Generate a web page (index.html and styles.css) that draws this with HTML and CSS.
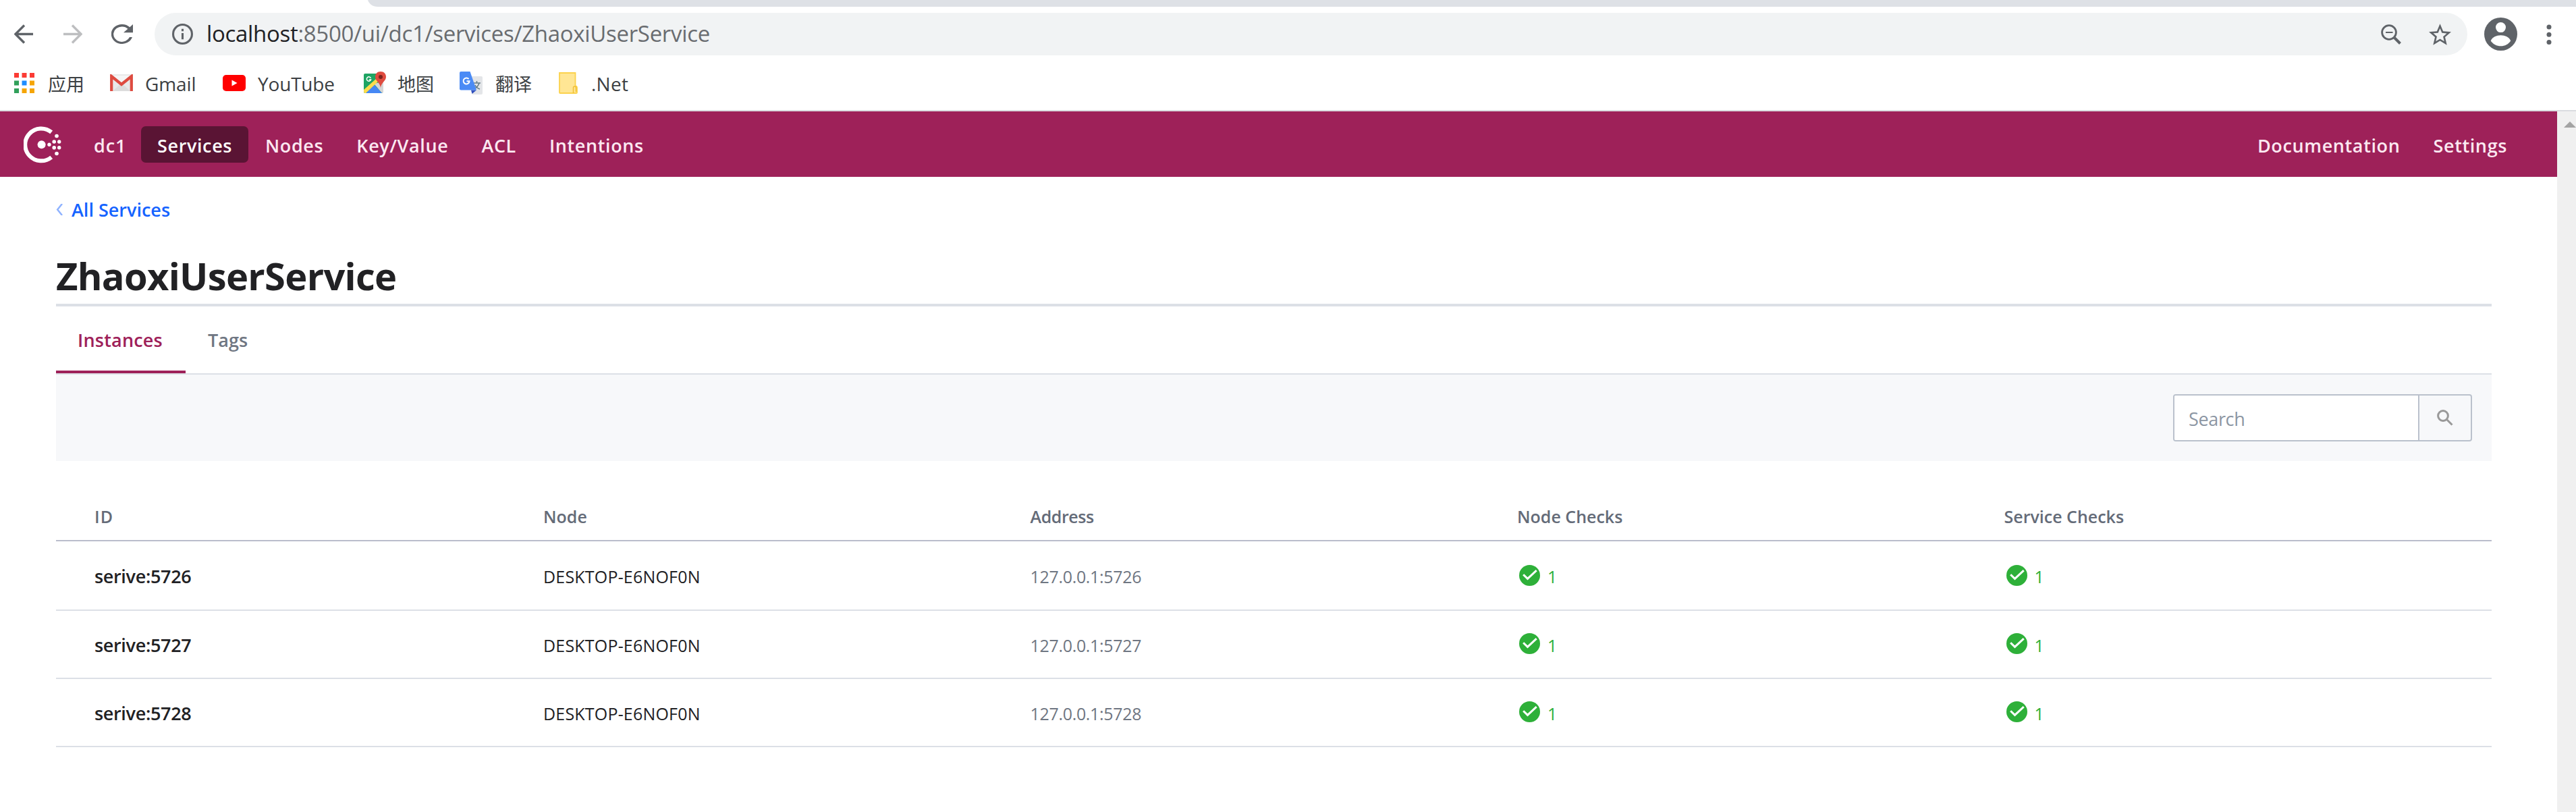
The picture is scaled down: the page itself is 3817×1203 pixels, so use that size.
FILE: index.html
```html
<!DOCTYPE html>
<html lang="zh-CN">
<head>
<meta charset="utf-8">
<title>ZhaoxiUserService</title>
<link rel="stylesheet" href="styles.css">
</head>
<body>
<div class="tab-strip"><svg class="tab-curve" viewBox="0 0 15 10"><path d="M0 0h15v10C7 10 2 6 0 0z"/></svg><div class="tab-rest"></div></div>
<div class="toolbar">
  <svg class="nav-icon back" viewBox="0 0 30 30"><path d="M29 15H2M15.500 1.500 2 15l13.500 13.500"/></svg>
  <svg class="nav-icon forward" viewBox="0 0 30 30"><path d="M1 15h27M14.500 1.500 28 15 14.500 28.500"/></svg>
  <svg class="reload" viewBox="4 4 16 16" preserveAspectRatio="none"><path d="M17.650 6.350A7.960 7.960 0 0 0 12 4a8 8 0 1 0 7.500 10.500h-2A6.200 6.200 0 1 1 12 5.900c1.660 0 3.140.69 4.220 1.780L13 10.800h7V4z"/></svg>
  <div class="address">
    <svg class="info" viewBox="0 0 30 30"><circle cx="15" cy="15" r="13.500"/><path d="M15 13.500v9M15 7.500v3.400"/></svg>
    <span class="url"><b>localhost</b>:8500/ui/dc1/services/ZhaoxiUserService</span>
    <svg class="zoom-out" viewBox="0 0 30 30"><circle cx="12" cy="12" r="10.400"/><path d="M20 20l8.500 8.500" class="thick"/><path d="M7 12h10.500" class="thin"/></svg>
    <svg class="star" viewBox="2 2 20 19"><path d="M22 9.240l-7.190-.62L12 2 9.190 8.630 2 9.240l5.460 4.730L5.820 21 12 17.270 18.180 21l-1.630-7.030L22 9.240zM12 15.400l-3.760 2.270 1-4.280-3.320-2.880 4.380-.38L12 6.100l1.710 4.040 4.380.38-3.320 2.880 1 4.280L12 15.400z"/></svg>
  </div>
  <svg class="avatar" viewBox="0 0 49 49"><circle cx="24.500" cy="24.500" r="24.500"/><g class="hole"><circle cx="24.500" cy="14.600" r="7.500"/><path d="M9.700 34.500C12 29 18 26.300 24.500 26.300S37 29 39.200 34.500C36 39.500 30.500 42.300 24.500 42.300S13 39.500 9.700 34.500z"/></g></svg>
  <svg class="kebab" viewBox="0 0 8 30"><circle cx="4" cy="4" r="3.500"/><circle cx="4" cy="15.200" r="3.500"/><circle cx="4" cy="26.400" r="3.500"/></svg>
</div>
<div class="bookmarks">
  <svg class="i-apps" viewBox="0 0 30 30"><path fill="#fb3b34" d="M0 0h7v7H0zM11.500 0h7v7h-7zM23 0h7v7h-7z"/><path fill="#31a05a" d="M0 11.500h7v7H0zM0 23h7v7H0z"/><path fill="#1e8cff" d="M11.500 11.500h7v7h-7z"/><path fill="#f5a506" d="M23 11.500h7v7h-7zM11.500 23h7v7h-7zM23 23h7v7h-7z"/></svg>
  <span class="cjk b-apps">应用</span>
  <svg class="i-gmail" viewBox="0 0 34 25"><rect width="34" height="25" rx="2" fill="#e9e9e9"/><path d="M4 25 17 13l13 12z" fill="#dcdcdc"/><path d="M4 2l13 11L30 2z" fill="#f5f5f5"/><path d="M2.200 25V3L17 15 31.800 3v22" fill="none" stroke="#de4b40" stroke-width="4.200"/></svg>
  <span class="b-gmail">Gmail</span>
  <svg class="i-youtube" viewBox="0 0 34 24"><rect width="34" height="24" rx="5" fill="#f00"/><path d="M13.500 7.500v9l8-4.500z" fill="#fff"/></svg>
  <span class="b-youtube">YouTube</span>
  <svg class="i-maps" viewBox="0 0 33 33"><path d="M2 3h26v29H2a2 2 0 0 1-2-2V5a2 2 0 0 1 2-2z" fill="#1fa463"/><path d="M29 15v15a2 2 0 0 1-2 2L15 18z" fill="#d5d5d5"/><path d="M15 19 27 32H3z" fill="#4687f4"/><path d="M0 27 18 11l3 4L3 32H2q-2 0-2-3z" fill="#fedc4c"/><path d="M10.500 9.800A3.200 3.200 0 1 0 10.600 12H7.800" fill="none" stroke="#fff" stroke-width="1.500"/><path d="M25 0c5 0 8 3.500 8 8 0 6-7 8-8 16-1-8-8-10-8-16 0-4.500 3-8 8-8z" fill="#df4b3f"/><circle cx="25" cy="8" r="3" fill="#7c231d"/></svg>
  <span class="cjk b-maps">地图</span>
  <svg class="i-translate" viewBox="0 0 34 34"><path d="M14 7h18a2 2 0 0 1 2 2v23a2 2 0 0 1-2 2H19z" fill="#e3e5e8"/><path d="M20 17h11M25.500 14v3M29 17c-1 4-4 7-8 9M23 20c1 3 4 5 7 6" fill="none" stroke="#647d87" stroke-width="1.500"/><path d="M17 27.500h8L18.500 33z" fill="#3150bd"/><path d="M2 0h13.500L25 27.500H2a2 2 0 0 1-2-2V2a2 2 0 0 1 2-2z" fill="#4b8bf5"/><path d="M13.500 11A4.500 4.500 0 1 0 14.600 14.200H10.500" fill="none" stroke="#fff" stroke-width="2"/></svg>
  <span class="cjk b-translate">翻译</span>
  <svg class="i-folder" viewBox="0 0 28 32"><path d="M1 1h23.500v19.500q2.500.3 2.500 2.500v7q0 1-1 1H2q-1 0-1-1z" fill="#ffe694" stroke="#fbd24c" stroke-width="1.800"/><path d="M21.500 31v-8q0-2 2-2t2 2v6" fill="none" stroke="#f0bf35" stroke-width="1.500"/></svg>
  <span class="b-net">.Net</span>
</div>
<div class="viewport">
  <div class="page">
    <nav class="main-nav">
      <svg class="logo" viewBox="0 0 56 55"><path d="M41.200 8.900A23.900 23.900 0 1 0 41.200 46"/><g><circle cx="26.600" cy="27.300" r="6"/><circle cx="38" cy="27.300" r="2.700"/><circle cx="45.200" cy="23" r="2.800"/><circle cx="45.200" cy="31.700" r="2.800"/><circle cx="52.700" cy="23" r="2.700"/><circle cx="52.700" cy="31.700" r="2.700"/><circle cx="49" cy="14.500" r="2.800"/><circle cx="49" cy="40.500" r="2.800"/></g></svg>
      <a class="dc">dc1</a>
      <a class="link active">Services</a>
      <a class="link">Nodes</a>
      <a class="link">Key/Value</a>
      <a class="link">ACL</a>
      <a class="link">Intentions</a>
      <span class="push"></span>
      <a class="link">Documentation</a>
      <a class="link">Settings</a>
    </nav>
    <main class="content">
      <a class="crumb"><svg viewBox="0 0 11 17"><path d="M9 0 2.200 8.500 9 17"/></svg><span>All Services</span></a>
      <h1 class="title">ZhaoxiUserService</h1>
      <div class="tabs"><a class="tab selected">Instances</a><a class="tab">Tags</a></div>
      <div class="filter"><div class="search"><span class="field">Search</span><span class="button"><svg viewBox="0 0 24 24"><circle cx="9" cy="9" r="7.400"/><path d="M14.500 14.500l8 8"/></svg></span></div></div>
      <div class="table">
        <div class="row head"><span class="wide">ID</span><span>Node</span><span class="tight">Address</span><span>Node Checks</span><span>Service Checks</span></div>
        <div class="row first"><span class="id">serive:5726</span><span class="node">DESKTOP-E6NOF0N</span><span class="addr">127.0.0.1:5726</span><span class="ok"><svg viewBox="0 0 31 31"><circle cx="15.500" cy="15.500" r="15.500"/><path d="M6.200 14.200l6.300 6.200L25.700 8.200"/></svg><span>1</span></span><span class="ok"><svg viewBox="0 0 31 31"><circle cx="15.500" cy="15.500" r="15.500"/><path d="M6.200 14.200l6.300 6.200L25.700 8.200"/></svg><span>1</span></span></div>
        <div class="row"><span class="id">serive:5727</span><span class="node">DESKTOP-E6NOF0N</span><span class="addr">127.0.0.1:5727</span><span class="ok"><svg viewBox="0 0 31 31"><circle cx="15.500" cy="15.500" r="15.500"/><path d="M6.200 14.200l6.300 6.200L25.700 8.200"/></svg><span>1</span></span><span class="ok"><svg viewBox="0 0 31 31"><circle cx="15.500" cy="15.500" r="15.500"/><path d="M6.200 14.200l6.300 6.200L25.700 8.200"/></svg><span>1</span></span></div>
        <div class="row"><span class="id">serive:5728</span><span class="node">DESKTOP-E6NOF0N</span><span class="addr">127.0.0.1:5728</span><span class="ok"><svg viewBox="0 0 31 31"><circle cx="15.500" cy="15.500" r="15.500"/><path d="M6.200 14.200l6.300 6.200L25.700 8.200"/></svg><span>1</span></span><span class="ok"><svg viewBox="0 0 31 31"><circle cx="15.500" cy="15.500" r="15.500"/><path d="M6.200 14.200l6.300 6.200L25.700 8.200"/></svg><span>1</span></span></div>
      </div>
    </main>
  </div>
  <div class="scrollbar"><svg viewBox="0 0 18 9"><path d="M9 0l9 9H0z"/></svg></div>
</div>
</body>
</html>
```
FILE: styles.css
```css
* { box-sizing: border-box; }
body { margin: 0; width: 3817px; height: 1203px; overflow: hidden; display: flex; flex-direction: column; background: #fff; font-family: "Open Sans", "Noto Sans CJK SC", sans-serif; color: #212124; }
svg { display: block; flex: none; }
span, a { white-space: nowrap; }

.tab-strip { display: flex; height: 10px; padding-left: 545px; }
.tab-curve { width: 15px; height: 10px; fill: #dee1e6; }
.tab-rest { flex: 1; background: #dee1e6; }

.toolbar { display: flex; align-items: center; height: 81px; padding-left: 21px; }
.nav-icon { width: 29px; height: 29px; fill: none; stroke: #5f6368; stroke-width: 3.600; }
.forward { margin-left: 43px; stroke: #bdbec0; }
.reload { width: 32px; height: 29px; margin-left: 43px; fill: #5f6368; }
.address { display: flex; align-items: center; width: 3427px; height: 63px; margin-left: 32px; padding-left: 26px; border-radius: 32px; background: #f1f3f4; }
.info { width: 31px; height: 31px; fill: none; stroke: #5f6368; stroke-width: 3; }
.url { flex: 1; margin-left: 20px; padding-bottom: 3px; font-size: 33px; line-height: 57px; letter-spacing: -0.310px; color: #696c70; }
.url b { font-weight: 400; color: #202124; }
.zoom-out { width: 30px; height: 30px; fill: none; stroke: #5f6368; stroke-width: 2.800; }
.zoom-out .thick { stroke-width: 4; }
.zoom-out .thin { stroke-width: 2; }
.star { width: 33px; height: 32px; margin: 0 24px 0 41px; fill: #5f6368; }
.avatar { width: 49px; height: 49px; margin-left: 25px; fill: #5f6368; }
.hole { fill: #fff; }
.kebab { width: 8px; height: 30px; margin-left: 43px; fill: #5f6368; }

.bookmarks { display: flex; align-items: center; height: 74px; padding: 0 0 9px 21px; border-bottom: 2px solid #dadce0; font-size: 28px; line-height: 40px; color: #3c4043; }
.bookmarks span { padding-top: 3px; }
.cjk { font-family: "Noto Sans CJK SC", sans-serif; font-size: 27px; width: 54px; }
.i-apps { width: 30px; height: 30px; }
.i-gmail { width: 34px; height: 25px; }
.i-youtube { width: 34px; height: 24px; }
.i-maps { width: 33px; height: 33px; }
.i-translate { width: 34px; height: 34px; }
.i-folder { width: 28px; height: 32px; }
.b-apps { margin: 0 38px 0 20px; }
.b-gmail { width: 115px; margin-left: 18px; letter-spacing: -0.120px; }
.b-youtube { width: 157px; margin-left: 18px; letter-spacing: -0.180px; }
.b-maps { margin: 0 38px 0 17px; }
.b-translate { margin: 0 40px 0 19px; }
.b-net { margin-left: 20px; letter-spacing: 0.250px; }

.viewport { display: flex; flex: 1; }
.page { width: 3789px; }
.scrollbar { width: 28px; padding: 15px 0 0 10px; background: #f0f0f0; }
.scrollbar svg { width: 18px; height: 9px; fill: #a3a3a3; }

.main-nav { display: flex; align-items: center; height: 97px; padding: 1px 49px 0 35px; background: #9e2159; color: #fce8f1; font-size: 27px; font-weight: 600; line-height: 53px; letter-spacing: 0.620px; }
.logo { width: 56px; height: 55px; fill: none; stroke: #fff; stroke-width: 6; }
.logo g { fill: #fff; stroke: none; }
.dc { width: 70px; margin-left: 48px; padding-top: 2px; letter-spacing: 0.900px; }
.link { height: 54px; padding: 2px 24px 0; margin-right: 1px; border-radius: 7px; }
.active { background: #5a1434; color: #fff; }
.push { flex: 1; }

.content { padding: 0 97px 0 83px; }
.crumb { display: flex; align-items: center; height: 40px; margin-top: 28px; font-size: 27px; font-weight: 600; line-height: 40px; color: #1563ff; }
.crumb span { padding-top: 2px; }
.crumb svg { width: 11px; height: 17px; margin-right: 12px; fill: none; stroke: #8fb3ff; stroke-width: 2.500; }
.title { height: 124px; margin: 0; padding-top: 38px; border-bottom: 4px solid #dce0e6; font-size: 56px; font-weight: 700; line-height: 80px; letter-spacing: -0.680px; }
.tabs { display: flex; height: 101px; border-bottom: 2px solid #dce0e6; font-size: 27px; line-height: 100px; color: #6f7682; font-weight: 600; }
.tab { height: 99px; padding: 0 33px; }
.selected { width: 192px; padding-left: 32px; border-bottom: 4px solid #9e2159; color: #9e2159; letter-spacing: 0.200px; }
.filter { display: flex; justify-content: flex-end; align-items: center; height: 128px; padding-right: 29px; background: #f7f8fa; }
.search { display: flex; width: 443px; height: 70px; border: 2px solid #bac1cc; border-radius: 4px; overflow: hidden; }
.field { flex: 1; padding-left: 21px; background: #fff; font-size: 27px; line-height: 69px; letter-spacing: -0.350px; color: #8c96a3; }
.button { display: flex; align-items: center; width: 78px; padding-left: 26px; border-left: 2px solid #bac1cc; }
.button svg { width: 24px; height: 24px; fill: none; stroke: #999; stroke-width: 3; }

.table { margin-top: 48px; }
.row { display: grid; grid-template-columns: 665px 721.500px 721.500px 721.500px 1fr; align-items: center; height: 101px; padding: 0 0 2px 57px; border-bottom: 2px solid #dce0e6; font-size: 25px; line-height: 40px; }
.first { height: 103px; padding-bottom: 1px; }
.head { height: 71px; padding-bottom: 1px; border-bottom-color: #babdcc; font-weight: 600; color: #646b78; }
.wide { letter-spacing: 1px; }
.tight { letter-spacing: -0.400px; }
.id { padding-top: 4px; font-size: 27px; font-weight: 600; letter-spacing: -0.330px; }
.node { padding-top: 4px; letter-spacing: 0.190px; }
.addr { padding-top: 4px; letter-spacing: -0.320px; color: #6f7682; }
.ok { display: flex; align-items: center; padding-left: 3px; gap: 11px; color: #2eb039; }
.ok span { padding-top: 4px; }
.ok svg { width: 31px; height: 31px; fill: #2eb039; }
.ok path { fill: none; stroke: #fff; stroke-width: 3; }
```
